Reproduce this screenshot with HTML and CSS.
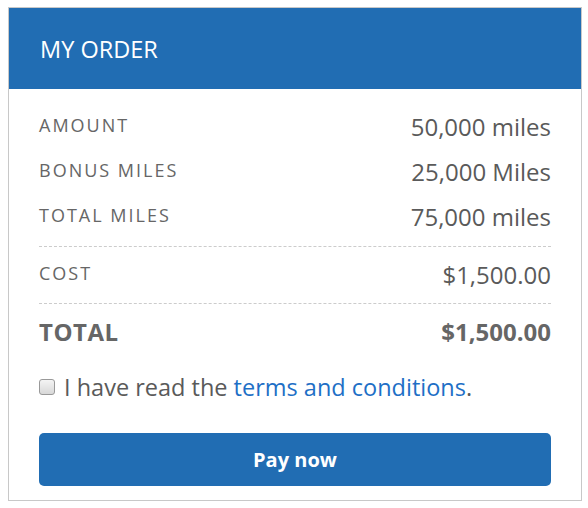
FILE: index.html
```html
<!DOCTYPE html>
<html lang="en">
<head>
    <meta charset="UTF-8">
    <meta name="viewport" content="width=device-width, initial-scale=1.0">
    <title>My Order</title>
    <link rel="stylesheet" href="styles.css">
</head>
<body>

    <!-- order card -->
    <div class="order-card">
        <div class="order-header">MY ORDER</div>

        <div class="order-body">
            <div class="order-row">
                <span class="row-label">AMOUNT</span>
                <span class="row-value">50,000 miles</span>
            </div>
            <div class="order-row">
                <span class="row-label">BONUS MILES</span>
                <span class="row-value">25,000 Miles</span>
            </div>
            <div class="order-row">
                <span class="row-label">TOTAL MILES</span>
                <span class="row-value">75,000 miles</span>
            </div>

            <div class="order-row cost-row">
                <span class="row-label">COST</span>
                <span class="row-value">$1,500.00</span>
            </div>

            <div class="order-row total-row">
                <span class="row-label">TOTAL</span>
                <span class="row-value">$1,500.00</span>
            </div>

            <label class="terms">
                <input type="checkbox" class="terms-check">
                <span>I have read the <a href="#">terms and conditions</a>.</span>
            </label>

            <button class="pay-button">Pay now</button>
        </div>
    </div>

</body>
</html>
```

FILE: styles.css
```css
/* page */
body {
    margin: 7px 0 0 8px;
    font-family: 'Open Sans', 'Noto Sans', sans-serif;
    color: #666;
    background-color: white;
}

/* card */
.order-card {
    width: 574px;
    border: 1px solid #c8c8c8;
    box-sizing: border-box;
}

.order-header {
    background-color: #216db3;
    color: white;
    height: 81px;
    padding: 0 31px;
    display: flex;
    align-items: center;
    font-size: 23.5px;
}

.order-body {
    padding: 22px 30px 14px 30px;
}

/* rows */
.order-row {
    display: flex;
    justify-content: space-between;
    align-items: flex-start;
    height: 45px;
    line-height: 32px;
}

.row-label {
    font-size: 18px;
    letter-spacing: 2px;
    line-height: 26px;
    padding-top: 1px;
}

.row-value {
    font-size: 24px;
    color: #5a5a5a;
}

.cost-row {
    border-top: 1px dashed #ccc;
    height: 57px;
    padding-top: 12px;
    box-sizing: border-box;
}

.total-row {
    border-top: 1px dashed #ccc;
    height: 44px;
    padding-top: 12px;
    box-sizing: content-box;
}

.total-row .row-label,
.total-row .row-value {
    font-weight: bold;
    font-size: 24px;
    line-height: 32px;
    padding-top: 0;
    letter-spacing: 0.5px;
    color: #666;
}

.total-row .row-value {
    letter-spacing: 0;
}

/* terms */
.terms {
    display: flex;
    align-items: center;
    gap: 9px;
    font-size: 23.5px;
    line-height: 32px;
    margin-top: 11px;
    color: #5a5a5a;
}

.terms-check {
    appearance: none;
    -webkit-appearance: none;
    margin: 0;
    width: 16px;
    height: 16px;
    border: 1px solid #999;
    border-radius: 3px;
    background: linear-gradient(#f4f4f4, #d8d8d8);
    box-sizing: border-box;
}

.terms a {
    color: #1e6fc6;
    text-decoration: none;
}

/* button */
.pay-button {
    display: block;
    width: 100%;
    margin-top: 30px;
    height: 53px;
    border: none;
    border-radius: 5px;
    background-color: #216db3;
    color: white;
    font-family: inherit;
    font-weight: bold;
    font-size: 20px;
}
```
